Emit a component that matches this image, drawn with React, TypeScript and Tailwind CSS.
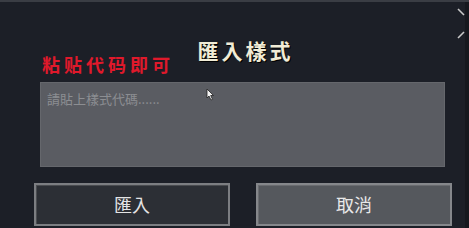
import React from 'react';

const cjk = { fontFamily: '"Noto Sans CJK TC", "Noto Sans CJK SC", sans-serif' };

const App: React.FC = () => {
  return (
    <div className="relative w-[469px] h-[228px] overflow-hidden bg-[#1c1f27] border-t-2 border-[#3a3d44]" style={cjk}>
      <div className="flex h-full">
        <div className="flex-1 flex flex-col">
          <div className="grid h-[80px]">
            <h1 className="col-start-1 row-start-1 justify-self-center self-start mt-[36px] ml-[26px] text-[21px] leading-[25px] font-bold tracking-[3px] text-[#f1ecd6] [text-shadow:1px_1px_0_#000]">
              匯入樣式
            </h1>
            <p className="col-start-1 row-start-1 justify-self-start self-end mb-[7px] ml-[42px] text-[18px] leading-[22px] font-bold tracking-[4px] text-[#e0192b]">
              粘贴代码即可
            </p>
          </div>
          <div className="ml-[40px] w-[405px] h-[85px] bg-[#5a5c62] border border-[#65676c] px-[6px] pt-[2px]">
            <span className="text-[13px] leading-[18px] text-[#8c8e92]">請貼上樣式代碼......</span>
          </div>
          <div className="flex gap-[26px] ml-[34px] mt-[16px]">
            <button className="w-[196px] h-[43px] bg-[#2c2f35] border-2 border-[#7c7e82] text-[18px] text-[#e4e4e4] shadow-[inset_1px_1px_0_#4a4c50]">
              匯入
            </button>
            <button className="w-[196px] h-[43px] bg-[#55585d] border-2 border-[#85878b] text-[18px] text-[#e8e8e8] shadow-[inset_1px_1px_0_#6a6c70]">
              取消
            </button>
          </div>
        </div>
        <div className="w-[4px] h-full bg-[#16181e]" />
      </div>

      {/* resize grips */}
      <svg className="absolute left-[457px] top-[6px]" width="9" height="32" viewBox="0 0 9 32">
        <path d="M1 1 L7 7" stroke="#c8c8c8" strokeWidth="1.6" />
        <path d="M1 30 L7 24" stroke="#c8c8c8" strokeWidth="1.6" />
      </svg>

      {/* mouse cursor */}
      <svg className="absolute left-[206px] top-[86px]" width="9" height="13" viewBox="0 0 9 13">
        <path d="M1 1 L1 10 L3 8 L5 12 L6.5 11.3 L4.7 7.5 L7.5 7.5 Z" fill="#f4f4f4" stroke="#222" strokeWidth="0.8" />
      </svg>
    </div>
  );
};

export default App;
